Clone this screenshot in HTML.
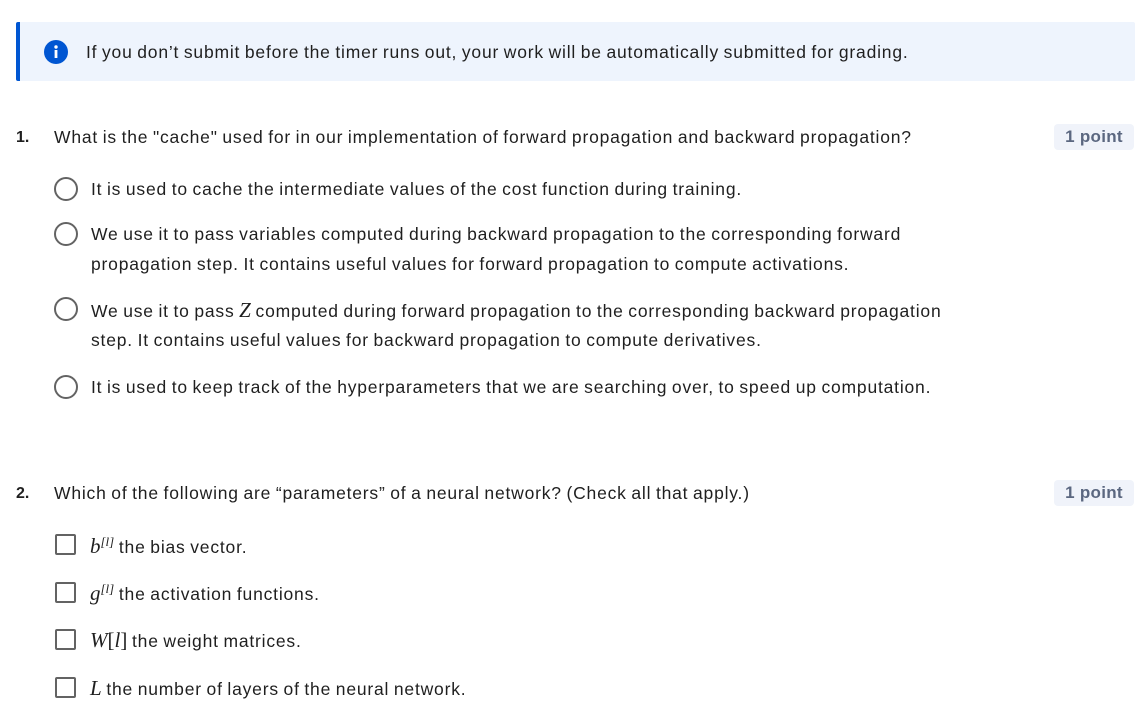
<!DOCTYPE html>
<html><head><style>
body{margin:0;width:1147px;height:720px;background:#fff;font-family:"Liberation Sans",sans-serif;color:#1f1f1f;position:relative;overflow:hidden}
.abs{position:absolute;white-space:nowrap}
.banner{position:absolute;left:16px;top:22px;width:1119px;height:59px;background:#eef4fd;border-left:4px solid #0056d2;box-sizing:border-box;border-radius:2px}
.t{font-size:17.5px;letter-spacing:0.8px;word-spacing:-1px}
.num{font-weight:bold;font-size:16px}
.badge{position:absolute;left:1054px;width:80px;height:26px;background:#f0f3fa;border-radius:4px;color:#5b6780;font-weight:bold;font-size:17px;text-align:center;line-height:26px;letter-spacing:0.3px}
.radio{position:absolute;left:54px;width:20px;height:20px;border:2px solid #636363;border-radius:50%}
.cb{position:absolute;left:55px;width:17px;height:17px;border:2px solid #636363;border-radius:2px}
i.m{font-family:"Liberation Serif",serif;font-size:21px;letter-spacing:0}
sup{font-family:"Liberation Serif",serif;font-style:italic;font-size:13px;letter-spacing:0}
</style></head><body>
<div class="banner"></div>
<svg class="abs" style="left:44px;top:40px" width="24" height="24"><circle cx="12" cy="12" r="12" fill="#0056d2"/><circle cx="12" cy="7" r="1.7" fill="#fff"/><rect x="10.6" y="10" width="2.8" height="8" fill="#fff"/></svg>
<div class="abs t" style="left:86px;top:42px">If you don’t submit before the timer runs out, your work will be automatically submitted for grading.</div>

<div class="abs num" style="left:16px;top:129px">1.</div>
<div class="abs t" style="left:54px;top:127px">What is the "cache" used for in our implementation of forward propagation and backward propagation?</div>
<div class="badge" style="top:124px">1 point</div>

<div class="radio" style="top:177px"></div>
<div class="abs t" style="left:91px;top:179px">It is used to cache the intermediate values of the cost function during training.</div>
<div class="radio" style="top:222px"></div>
<div class="abs t" style="left:91px;top:224px">We use it to pass variables computed during backward propagation to the corresponding forward</div>
<div class="abs t" style="left:91px;top:254px">propagation step. It contains useful values for forward propagation to compute activations.</div>
<div class="radio" style="top:297px"></div>
<div class="abs t" style="left:91px;top:298px">We use it to pass <i class="m">Z</i> computed during forward propagation to the corresponding backward propagation</div>
<div class="abs t" style="left:91px;top:330px">step. It contains useful values for backward propagation to compute derivatives.</div>
<div class="radio" style="top:375px"></div>
<div class="abs t" style="left:91px;top:377px">It is used to keep track of the hyperparameters that we are searching over, to speed up computation.</div>

<div class="abs num" style="left:16px;top:485px">2.</div>
<div class="abs t" style="left:54px;top:483px">Which of the following are “parameters” of a neural network? (Check all that apply.)</div>
<div class="badge" style="top:480px">1 point</div>

<div class="cb" style="top:534px"></div>
<div class="abs t" style="left:90px;top:534px"><i class="m">b</i><sup>[l]</sup> the bias vector.</div>
<div class="cb" style="top:582px"></div>
<div class="abs t" style="left:90px;top:581px"><i class="m">g</i><sup>[l]</sup> the activation functions.</div>
<div class="cb" style="top:629px"></div>
<div class="abs t" style="left:90px;top:628px"><i class="m">W</i><span style="font-family:'Liberation Serif',serif;font-size:21px;letter-spacing:0">[<i>l</i>]</span> the weight matrices.</div>
<div class="cb" style="top:677px"></div>
<div class="abs t" style="left:90px;top:676px"><i class="m">L</i> the number of layers of the neural network.</div>
</body></html>
